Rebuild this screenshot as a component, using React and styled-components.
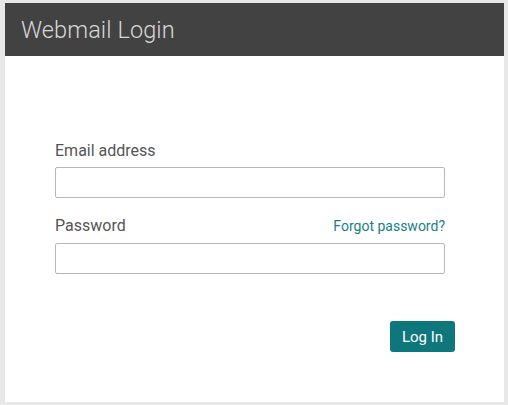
import React from "react";
import styled, {createGlobalStyle} from "styled-components";

const GlobalStyle = createGlobalStyle`
    html, body {
        margin: 0;
        padding: 0;
        background: #e8e8e8;
        font-family: Roboto, "Liberation Sans", sans-serif;
    }
    * {
        box-sizing: border-box;
    }
`;

const App = () => {
    return (
        <>
            <GlobalStyle/>
            <StyledPage>
                <StyledCard>
                    <StyledHeader>
                        <h1>Webmail Login</h1>
                    </StyledHeader>
                    <StyledBody>
                        <StyledForm onSubmit={(e) => e.preventDefault()}>
                            <StyledField>
                                <StyledLabelRow>
                                    <label htmlFor="email">Email address</label>
                                </StyledLabelRow>
                                <StyledInput id="email" type="email"/>
                            </StyledField>
                            <StyledField>
                                <StyledLabelRow>
                                    <label htmlFor="password">Password</label>
                                    <a href="#forgot">Forgot password?</a>
                                </StyledLabelRow>
                                <StyledInput id="password" type="password"/>
                            </StyledField>
                            <StyledActions>
                                <StyledButton type="submit">Log In</StyledButton>
                            </StyledActions>
                        </StyledForm>
                    </StyledBody>
                </StyledCard>
            </StyledPage>
        </>
    );
};

export default App;

const StyledPage = styled.div`
    width: 508px;
    height: 405px;
    padding: 3px 4px 3px 5px;
`;

const StyledCard = styled.div`
    height: 100%;
    background: #fff;
    display: flex;
    flex-direction: column;
`;

const StyledHeader = styled.div`
    height: 53px;
    background: #424242;
    display: flex;
    align-items: center;
    padding-left: 16px;

    >h1 {
        margin: 0;
        font-size: 23.5px;
        font-weight: 300;
        color: #d8d8d8;
        letter-spacing: 0.1px;
    }
`;

const StyledBody = styled.div`
    flex: 1;
    padding: 85px 0 0 50px;
`;

const StyledForm = styled.form`
    width: 400px;
    display: flex;
    flex-direction: column;
    gap: 18px;
`;

const StyledField = styled.div`
    display: flex;
    flex-direction: column;
    gap: 7px;
    width: 390px;
`;

const StyledLabelRow = styled.div`
    display: flex;
    justify-content: space-between;
    align-items: baseline;
    line-height: 19px;

    >label {
        font-size: 16px;
        color: #555;
    }

    >a {
        font-size: 14px;
        color: #1a7f84;
        text-decoration: none;
    }
`;

const StyledInput = styled.input`
    height: 31px;
    width: 100%;
    border: 1px solid #b8b8b8;
    border-radius: 2px;
    padding: 4px 8px;
    font-family: inherit;
    font-size: 14px;
    outline: none;
`;

const StyledActions = styled.div`
    display: flex;
    justify-content: flex-end;
    margin-top: 29px;
`;

const StyledButton = styled.button`
    height: 31px;
    width: 65px;
    border: 0;
    border-radius: 3px;
    background: #0e777c;
    color: #fff;
    font-family: inherit;
    font-size: 15px;
    padding: 0;
    cursor: pointer;
`;
